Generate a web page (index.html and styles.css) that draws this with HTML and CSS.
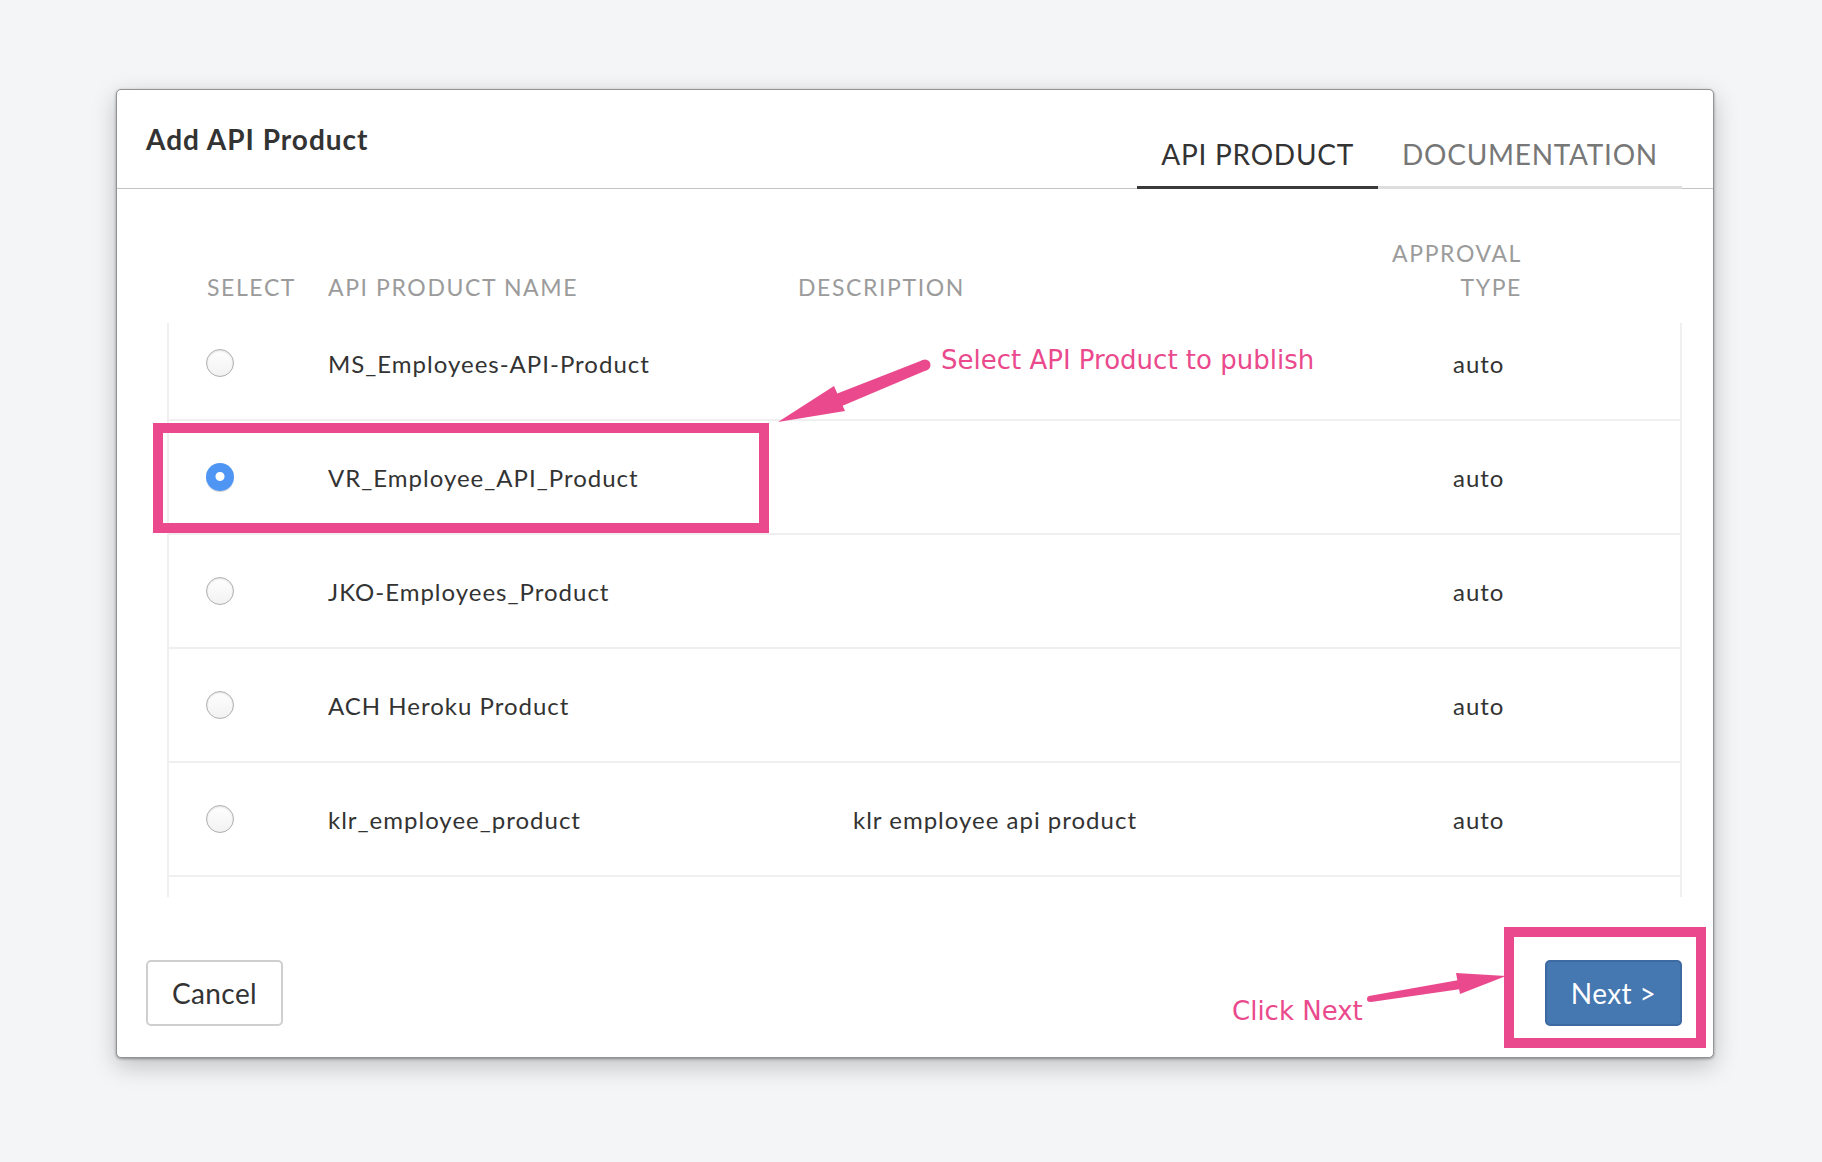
FILE: index.html
```html
<!DOCTYPE html>
<html>
<head>
<meta charset="utf-8">
<title>Add API Product</title>
<link rel="stylesheet" href="styles.css">
</head>
<body>
<div class="dialog">
  <div class="dlg-head">
    <h1 class="dlg-title">Add API Product</h1>
    <nav class="tabs">
      <div class="tab active">API PRODUCT</div>
      <div class="tab">DOCUMENTATION</div>
    </nav>
  </div>
  <div class="dlg-body">
    <div class="grid thead">
      <div class="th th-select">SELECT</div>
      <div class="th">API PRODUCT NAME</div>
      <div class="th">DESCRIPTION</div>
      <div class="th th-approval">APPROVAL<br>TYPE</div>
    </div>
    <div class="tbody">
      <div class="rows">
        <div class="grid row">
          <div class="td td-select"><span class="radio"></span></div>
          <div class="td">MS_Employees-API-Product</div>
          <div class="td td-desc"></div>
          <div class="td td-approval">auto</div>
        </div>
        <div class="grid row">
          <div class="td td-select"><span class="radio checked"></span></div>
          <div class="td">VR_Employee_API_Product</div>
          <div class="td td-desc"></div>
          <div class="td td-approval">auto</div>
        </div>
        <div class="grid row">
          <div class="td td-select"><span class="radio"></span></div>
          <div class="td">JKO-Employees_Product</div>
          <div class="td td-desc"></div>
          <div class="td td-approval">auto</div>
        </div>
        <div class="grid row">
          <div class="td td-select"><span class="radio"></span></div>
          <div class="td">ACH Heroku Product</div>
          <div class="td td-desc"></div>
          <div class="td td-approval">auto</div>
        </div>
        <div class="grid row">
          <div class="td td-select"><span class="radio"></span></div>
          <div class="td">klr_employee_product</div>
          <div class="td td-desc">klr employee api product</div>
          <div class="td td-approval">auto</div>
        </div>
        <div class="grid row"></div>
      </div>
    </div>
  </div>
  <div class="dlg-foot">
    <button class="btn btn-default">Cancel</button>
    <button class="btn btn-primary">Next &gt;</button>
  </div>
</div>

<svg class="annot" width="1822" height="1162" viewBox="0 0 1822 1162" xmlns="http://www.w3.org/2000/svg">
  <g fill="none" stroke="#ea4a8d" stroke-width="10">
    <rect x="158" y="428" width="606" height="100"/>
    <rect x="1509" y="932" width="192" height="111"/>
  </g>
  <g fill="#ea4a8d" stroke="none">
    <path d="M923 360 L927 370 L842 406 L836 394 Z"/>
    <circle cx="925" cy="365" r="5.5"/>
    <polygon points="778,422 834,386 845,411"/>
    <path d="M1369 996 L1459 980 L1461 989 L1371 1002 Z"/>
    <circle cx="1370" cy="999" r="3"/>
    <polygon points="1506,976 1456,973 1460,994"/>
  </g>
  <g class="annot-text">
    <text x="941" y="369">Select API Product to publish</text>
    <text x="1232" y="1020">Click Next</text>
  </g>
</svg>
</body>
</html>
```

FILE: styles.css
```css
* { box-sizing: border-box; }

html, body {
  margin: 0;
  padding: 0;
}

body {
  background: #f4f5f7;
  width: 1822px;
  height: 1162px;
  padding: 89px 0 0 116px;
  font-family: Lato, "Open Sans", sans-serif;
  color: #333;
  position: relative;
  overflow: hidden;
}

.dialog {
  width: 1598px;
  height: 969px;
  background: #fff;
  border: 1px solid #939393;
  border-radius: 5px;
  box-shadow: 0 1px 3px rgba(0, 0, 0, 0.35), 0 8px 24px rgba(0, 0, 0, 0.22);
  display: flex;
  flex-direction: column;
}

.dlg-head {
  height: 99px;
  border-bottom: 1px solid #c4c4c4;
  display: flex;
  justify-content: space-between;
  align-items: center;
  padding-left: 29px;
  padding-right: 31px;
}

.dlg-title {
  margin: 0;
  font-size: 28px;
  font-weight: 700;
  color: #333;
  letter-spacing: 1px;
}

.tabs {
  align-self: flex-end;
  display: flex;
  margin-bottom: -1px;
}

.tab {
  font-size: 28px;
  line-height: 34px;
  padding: 0 24px 15px;
  border-bottom: 3px solid #dedede;
  color: #777;
  letter-spacing: 0.75px;
}

.tab.active {
  color: #333;
  border-bottom-color: #3a3a3a;
}

.dlg-body {
  padding: 0 31px 0 50px;
}

.grid {
  display: grid;
  grid-template-columns: 161px 470px 593px 1fr;
}

.thead {
  height: 134px;
  align-items: end;
  padding-bottom: 19px;
}

.th {
  font-size: 23px;
  line-height: 34px;
  color: #9b9b9b;
  letter-spacing: 1.6px;
}

.th-select { padding-left: 40px; }

.th-approval {
  text-align: right;
  padding-right: 160px;
}

.tbody {
  height: 574px;
  overflow: hidden;
  border-left: 2px solid #f0f0f0;
  border-right: 2px solid #f0f0f0;
}

.rows {
  margin-top: -16px;
  margin-left: -2px;
}

.row {
  height: 114px;
  border-bottom: 2px solid #efefef;
  align-items: center;
  font-size: 24px;
  letter-spacing: 1px;
  color: #333;
}

.td-select {
  padding-left: 39px;
  display: flex;
  align-items: center;
}

.td-desc { padding-left: 55px; }

.td-approval { padding-left: 62px; }

.radio {
  display: block;
  width: 28px;
  height: 28px;
  border-radius: 50%;
  border: 1.5px solid #b0b0b0;
  background: linear-gradient(#ffffff, #f2f2f2);
  box-shadow: inset 0 1px 2px rgba(0, 0, 0, 0.12);
}

.radio.checked {
  border: none;
  background: radial-gradient(circle at 50% 48%, #fff 0 4px, #4f95f4 5px);
  box-shadow: 0 1px 1px rgba(0, 0, 0, 0.18);
}

.dlg-foot {
  flex: 1;
  display: flex;
  justify-content: space-between;
  align-items: flex-start;
  padding: 63px 31px 0 29px;
}

.btn {
  width: 137px;
  height: 66px;
  border-radius: 5px;
  font-family: Lato, "Open Sans", sans-serif;
  font-size: 28px;
  letter-spacing: 0.4px;
  padding: 0;
}

.btn-default {
  background: #fff;
  border: 2px solid #cfcfcf;
  color: #333;
}

.btn-primary {
  background: #4577b1;
  border: 2px solid #3d6aa0;
  color: #fff;
}

.annot {
  position: absolute;
  left: 0;
  top: 0;
  pointer-events: none;
}

.annot-text {
  font-family: "DejaVu Sans", Verdana, sans-serif;
  font-size: 26px;
  fill: #ea4a8d;
}
```
